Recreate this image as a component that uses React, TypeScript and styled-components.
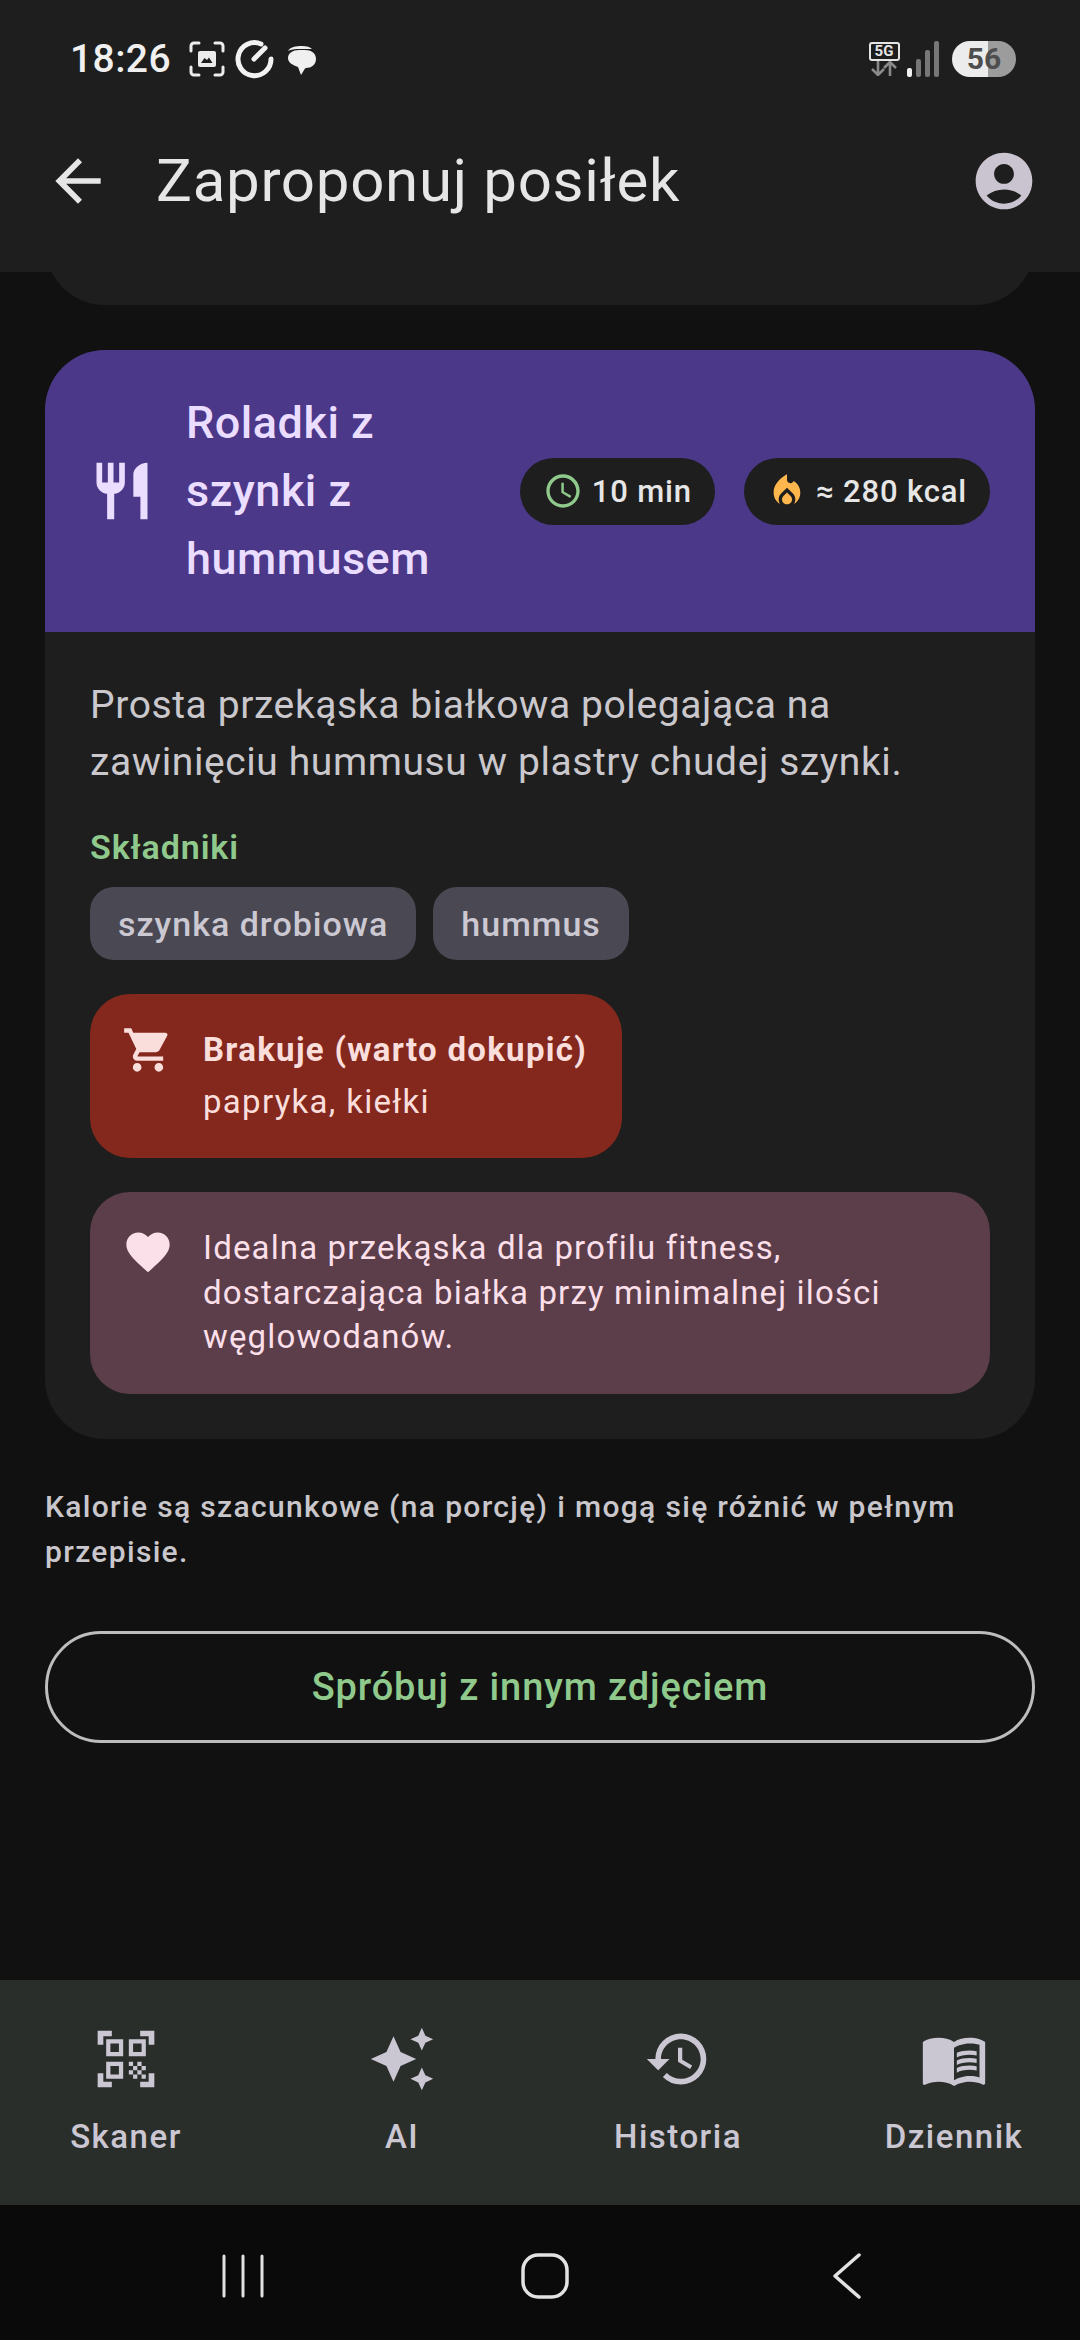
import React from "react";
import styled, { createGlobalStyle } from "styled-components";
import {
  MdAccountCircle,
  MdArrowBack,
  MdAutoAwesome,
  MdFavorite,
  MdHistory,
  MdLocalFireDepartment,
  MdMenuBook,
  MdOutlineSchedule,
  MdQrCodeScanner,
  MdRestaurant,
  MdShoppingCart,
} from "react-icons/md";

const Global = createGlobalStyle`
  html, body { margin: 0; padding: 0; background: #111111; }
  * { box-sizing: border-box; }
  body { font-family: Roboto, "Noto Sans", sans-serif; -webkit-font-smoothing: antialiased; }
`;

const Screen = styled.div`
  width: 1080px;
  height: 2340px;
  display: flex;
  flex-direction: column;
  background: #111111;
  overflow: hidden;
`;

const Header = styled.header`
  height: 272px;
  background: #1e1e1e;
  display: flex;
  flex-direction: column;
`;

const StatusBar = styled.div`
  height: 118px;
  padding: 0 64px 0 70px;
  display: flex;
  align-items: center;
  justify-content: space-between;
`;

const StatusGroup = styled.div`
  display: flex;
  align-items: center;
`;

const Clock = styled.span`
  font-size: 39px;
  font-weight: 500;
  color: #f0f0f0;
  margin-right: 18px;
  letter-spacing: 0.4px;
`;

const FiveGStack = styled.div`
  width: 32px;
  display: flex;
  flex-direction: column;
  align-items: center;
  margin-right: 6px;
`;

const FiveG = styled.span`
  width: 31px;
  height: 19px;
  border: 2px solid #e4e4e4;
  border-radius: 3px;
  font-size: 15px;
  line-height: 15px;
  font-weight: 700;
  color: #e4e4e4;
  text-align: center;
`;

const Battery = styled.div`
  width: 64px;
  height: 36px;
  margin-left: 12px;
  border-radius: 18px;
  background: linear-gradient(90deg, #ececec 0 36px, #9c9c9c 36px 100%);
  color: #4e4e4e;
  font-size: 30px;
  font-weight: 700;
  line-height: 36px;
  text-align: center;
`;

const AppBar = styled.div`
  height: 126px;
  padding: 0 44px;
  display: flex;
  align-items: center;
  color: #e6e0e9;
`;

const Title = styled.h1`
  flex: 1;
  margin: 0 0 0 44px;
  font-size: 60px;
  font-weight: 400;
  color: #e6e6e6;
  line-height: 72px;
  letter-spacing: 0.7px;
`;

const AvatarSlot = styled.div`
  display: flex;
  margin-right: -2px;
`;

const Stub = styled.div`
  height: 33px;
  flex: none;
  overflow: hidden;
  &::after {
    content: "";
    display: block;
    height: 120px;
    margin: -87px 45px 0;
    background: #1e1e1e;
    border-radius: 60px;
  }
`;

const Main = styled.main`
  flex: 1;
  padding: 45px 45px 0;
  display: flex;
  flex-direction: column;
`;

const Card = styled.section`
  background: #1e1e1e;
  border-radius: 60px;
  overflow: hidden;
`;

const CardHead = styled.div`
  height: 282px;
  background: #4b3889;
  padding: 0 45px 0 43px;
  display: flex;
  align-items: center;
  color: #eaddff;
`;

const MealTitle = styled.h2`
  flex: 1;
  margin: 0 30px 0 30px;
  font-size: 45px;
  font-weight: 500;
  line-height: 68px;
  color: #eaddff;
  letter-spacing: 0.5px;
`;

const Pill = styled.div<{ $gap?: number }>`
  height: 67px;
  padding: 0 23px;
  margin-left: ${(p) => p.$gap ?? 0}px;
  border-radius: 34px;
  background: #1e1e1e;
  display: flex;
  align-items: center;
  gap: 9px;
  font-size: 31px;
  font-weight: 500;
  color: #e6e6e6;
  white-space: nowrap;
  letter-spacing: 0.85px;
`;

const CardBody = styled.div`
  padding: 45px 45px 45px;
  display: flex;
  flex-direction: column;
`;

const Description = styled.p`
  margin: 0;
  font-size: 39px;
  line-height: 57px;
  color: #cac8cc;
  letter-spacing: 0.6px;
`;

const SectionLabel = styled.h3`
  margin: 34px 0 0;
  font-size: 34px;
  line-height: 44px;
  font-weight: 600;
  color: #90c98c;
  letter-spacing: 0.9px;
`;

const Chips = styled.div`
  margin-top: 18px;
  display: flex;
  gap: 17px;
`;

const Chip = styled.span`
  height: 73px;
  padding: 0 28px;
  border-radius: 24px;
  background: #4a4852;
  display: flex;
  align-items: center;
  font-size: 34px;
  font-weight: 500;
  color: #cbc8d2;
  letter-spacing: 1px;
`;

const Notice = styled.div<{ $bg: string; $fg: string; $fit?: boolean; $pad: number; $top: number }>`
  margin-top: ${(p) => p.$top}px;
  padding: ${(p) => p.$pad}px 32px;
  align-self: ${(p) => (p.$fit ? "flex-start" : "stretch")};
  width: ${(p) => (p.$fit ? "532px" : "auto")};
  border-radius: 40px;
  background: ${(p) => p.$bg};
  color: ${(p) => p.$fg};
  display: flex;
  align-items: flex-start;
  gap: 29px;
  svg { flex: none; }
`;

const NoticeBody = styled.div`
  font-size: 33px;
  line-height: 52px;
  letter-spacing: 1.3px;
`;

const NoticeStrong = styled.div`
  font-weight: 700;
`;

const HintText = styled.div`
  font-size: 33px;
  line-height: 44.5px;
  letter-spacing: 1.15px;
`;

const Caption = styled.p`
  margin: 45px 0 0;
  font-size: 30px;
  line-height: 45px;
  font-weight: 500;
  color: #c9c7cb;
  letter-spacing: 1.33px;
`;

const OutlineButton = styled.button`
  margin-top: 57px;
  height: 112px;
  width: 100%;
  border-radius: 56px;
  border: 3px solid #bdbcbf;
  background: transparent;
  font-family: inherit;
  font-size: 38px;
  font-weight: 500;
  color: #90c98c;
  letter-spacing: 0.9px;
`;

const BottomNav = styled.nav`
  height: 225px;
  flex: none;
  background: #2a2e2a;
  display: grid;
  grid-template-columns: repeat(4, 276px);
  justify-content: center;
`;

const NavItem = styled.div`
  display: flex;
  flex-direction: column;
  align-items: center;
  padding-top: 37px;
  color: #cac6d2;
`;

const NavIconSlot = styled.div`
  height: 84px;
  display: flex;
  align-items: center;
  justify-content: center;
`;

const NavLabel = styled.span`
  margin-top: 14px;
  font-size: 33px;
  line-height: 44px;
  font-weight: 500;
  letter-spacing: 1.5px;
`;

const SystemBar = styled.div`
  height: 135px;
  flex: none;
  background: #0a0a0a;
  padding: 6px 0 0 10px;
  display: grid;
  grid-template-columns: repeat(3, 302px);
  justify-content: center;
  align-items: center;
  color: #e2e2e2;
`;

const SystemSlot = styled.div`
  display: flex;
  justify-content: center;
`;

export default function App() {
  return (
    <Screen>
      <Global />
      <Header>
        <StatusBar>
          <StatusGroup>
            <Clock>18:26</Clock>
            <svg width="36" height="36" viewBox="0 0 36 36" fill="none" stroke="#ececec" strokeWidth="3" strokeLinecap="round" style={{ marginRight: 9 }}>
              <path d="M2 10V5a3 3 0 0 1 3-3h5M26 2h5a3 3 0 0 1 3 3v5M34 26v5a3 3 0 0 1-3 3h-5M10 34H5a3 3 0 0 1-3-3v-5" />
              <rect x="9" y="10" width="18" height="16" rx="2" fill="#ececec" stroke="none" />
              <path d="M12 22l3.5-5 2.5 2 2-2.5 3.5 5.5z" fill="#1e1e1e" stroke="none" />
            </svg>
            <svg width="40" height="40" viewBox="0 0 40 40" fill="none" stroke="#f2f2f2" strokeWidth="5" strokeLinecap="round" style={{ marginRight: 11 }}>
              <path d="M27 5A16.5 16.5 0 1 0 37 20" />
              <path d="M20 20L31 9" />
            </svg>
            <svg width="32" height="32" viewBox="0 0 32 32" style={{ marginTop: 2 }}>
              <path d="M3 7c2-4 8-5 14-5 5 0 8 1 10 3H12C8 5 5 6 3 7z" fill="#f0f0f0" />
              <path d="M14 6h6c6 0 11 3 11 9s-5 9-10 9l-1 .5-4 6.5-3-8C8 21 3 19 3 14s5-8 11-8z" fill="#f0f0f0" />
            </svg>
          </StatusGroup>
          <StatusGroup>
            <FiveGStack>
              <FiveG>5G</FiveG>
              <svg width="28" height="15" viewBox="0 0 28 15" fill="none" stroke="#8a8a8a" strokeWidth="2.6">
                <path d="M8 0v13M2 8l6 6 6-6" />
                <path d="M20 15V2M14 7l6-6 6 6" />
              </svg>
            </FiveGStack>
            <svg width="34" height="36" viewBox="0 0 34 36">
              <rect x="1" y="27" width="5" height="9" rx="2" fill="#f0f0f0" />
              <rect x="10" y="18" width="5" height="18" rx="2" fill="#777" />
              <rect x="19" y="9" width="5" height="27" rx="2" fill="#777" />
              <rect x="28" y="0" width="5" height="36" rx="2" fill="#777" />
            </svg>
            <Battery>56</Battery>
          </StatusGroup>
        </StatusBar>
        <AppBar>
          <MdArrowBack size={68} color="#e6e6e6" />
          <Title>Zaproponuj posiłek</Title>
          <AvatarSlot>
            <MdAccountCircle size={68} color="#cac4d0" />
          </AvatarSlot>
        </AppBar>
      </Header>
      <Stub />
      <Main>
        <Card>
          <CardHead>
            <MdRestaurant size={68} />
            <MealTitle>Roladki z szynki z hummusem</MealTitle>
            <Pill>
              <MdOutlineSchedule size={40} color="#90c98c" />
              10 min
            </Pill>
            <Pill $gap={29}>
              <MdLocalFireDepartment size={40} color="#ffb74d" />
              ≈ 280 kcal
            </Pill>
          </CardHead>
          <CardBody>
            <Description>
              Prosta przekąska białkowa polegająca na zawinięciu hummusu w plastry chudej szynki.
            </Description>
            <SectionLabel>Składniki</SectionLabel>
            <Chips>
              <Chip>szynka drobiowa</Chip>
              <Chip>hummus</Chip>
            </Chips>
            <Notice $bg="#84281e" $fg="#f9dedc" $fit $pad={30} $top={34}>
              <MdShoppingCart size={52} />
              <NoticeBody>
                <NoticeStrong>Brakuje (warto dokupić)</NoticeStrong>
                papryka, kiełki
              </NoticeBody>
            </Notice>
            <Notice $bg="#5b3e49" $fg="#fbdfe9" $pad={34} $top={34}>
              <MdFavorite size={52} />
              <HintText>
                Idealna przekąska dla profilu fitness, dostarczająca białka przy minimalnej ilości węglowodanów.
              </HintText>
            </Notice>
          </CardBody>
        </Card>
        <Caption>Kalorie są szacunkowe (na porcję) i mogą się różnić w pełnym przepisie.</Caption>
        <OutlineButton>Spróbuj z innym zdjęciem</OutlineButton>
      </Main>
      <BottomNav>
        <NavItem>
          <NavIconSlot><MdQrCodeScanner size={68} /></NavIconSlot>
          <NavLabel>Skaner</NavLabel>
        </NavItem>
        <NavItem>
          <NavIconSlot><MdAutoAwesome size={68} /></NavIconSlot>
          <NavLabel>AI</NavLabel>
        </NavItem>
        <NavItem>
          <NavIconSlot><MdHistory size={68} /></NavIconSlot>
          <NavLabel>Historia</NavLabel>
        </NavItem>
        <NavItem>
          <NavIconSlot><MdMenuBook size={68} /></NavIconSlot>
          <NavLabel>Dziennik</NavLabel>
        </NavItem>
      </BottomNav>
      <SystemBar>
        <SystemSlot>
          <svg width="44" height="44" viewBox="0 0 44 44" fill="none" stroke="currentColor" strokeWidth="3" strokeLinecap="round">
            <path d="M3 2v40M22 2v40M41 2v40" />
          </svg>
        </SystemSlot>
        <SystemSlot>
          <svg width="48" height="48" viewBox="0 0 48 48" fill="none" stroke="currentColor" strokeWidth="3.5">
            <rect x="2" y="3" width="44" height="42" rx="15" />
          </svg>
        </SystemSlot>
        <SystemSlot>
          <svg width="30" height="46" viewBox="0 0 30 46" fill="none" stroke="currentColor" strokeWidth="3.5" strokeLinecap="round" strokeLinejoin="round">
            <path d="M27 2L3 23l24 21" />
          </svg>
        </SystemSlot>
      </SystemBar>
    </Screen>
  );
}
